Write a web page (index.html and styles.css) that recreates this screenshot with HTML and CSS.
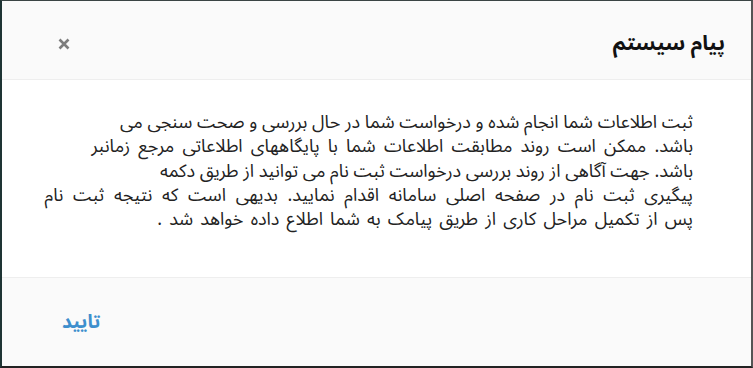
FILE: index.html
```html
<!DOCTYPE html>
<html lang="fa" dir="rtl">
<head>
<meta charset="utf-8">
<link rel="stylesheet" href="styles.css">
</head>
<body>
<div class="frame">
  <div class="header">
    <div class="title">پیام سیستم</div>
    <div class="close"><svg width="12" height="12" viewBox="0 0 12 12"><path d="M1.5 1.5 L10.5 10.5 M10.5 1.5 L1.5 10.5" stroke="#7d7d7d" stroke-width="2.6" stroke-linecap="butt"/></svg></div>
  </div>
  <div class="content">
    <p class="msg"><span class="ln">ثبت اطلاعات شما انجام شده و درخواست شما در حال بررسی و صحت سنجی می</span><span class="ln ln-2">باشد. ممکن است روند مطابقت اطلاعات شما با پایگاههای اطلاعاتی مرجع زمانبر</span><span class="ln">باشد. جهت آگاهی از روند بررسی درخواست ثبت نام می توانید از طریق دکمه</span><span class="ln ln-4">پیگیری ثبت نام در صفحه اصلی سامانه اقدام نمایید. بدیهی است که نتیجه ثبت نام</span><span class="ln ln-5">پس از تکمیل مراحل کاری از طریق پیامک به شما اطلاع داده خواهد شد .</span></p>
  </div>
  <div class="footer">
    <div class="confirm">تایید</div>
  </div>
</div>
</body>
</html>
```
FILE: styles.css
```css
html, body {
  margin: 0;
  padding: 0;
  background: #ffffff;
}
.frame {
  width: 753px;
  height: 368px;
  box-sizing: border-box;
  border-top: 1px solid #3a4444;
  border-left: 2px solid #1e3434;
  border-right: 2px solid #555555;
  border-bottom: 2px solid #222222;
  display: flex;
  flex-direction: column;
  font-family: "Noto Sans Arabic", "Noto Naskh Arabic", "DejaVu Sans", sans-serif;
  color: #222;
}
.header {
  height: 79px;
  background: #fafafa;
  border-bottom: 1px solid #eeeeee;
  display: flex;
  align-items: center;
  justify-content: space-between;
  padding: 5px 26px 0 56px;
  box-sizing: border-box;
}
.title {
  font-size: 21px;
  font-weight: bold;
  color: #111;
}
.close {
  display: flex;
  width: 12px;
  height: 12px;
  margin-top: 2px;
}
.content {
  height: 198px;
  background: #ffffff;
  border-bottom: 1px solid #eeeeee;
  padding: 30px 58px 0 30px;
  box-sizing: border-box;
}
.msg {
  margin: 0;
  font-size: 18px;
  line-height: 24.3px;
  color: #222;
  text-align: right;
  white-space: nowrap;
}
.ln {
  display: block;
}
.ln-2 {
  word-spacing: 3.5px;
}
.ln-4 {
  word-spacing: 5px;
}
.ln-5 {
  word-spacing: 2.5px;
}
.footer {
  flex: 1;
  background: #fafafa;
  display: flex;
  align-items: center;
  padding: 0 60px;
}
.confirm {
  margin-right: auto;
  font-size: 19px;
  font-weight: bold;
  color: #3d8fcd;
}
```
